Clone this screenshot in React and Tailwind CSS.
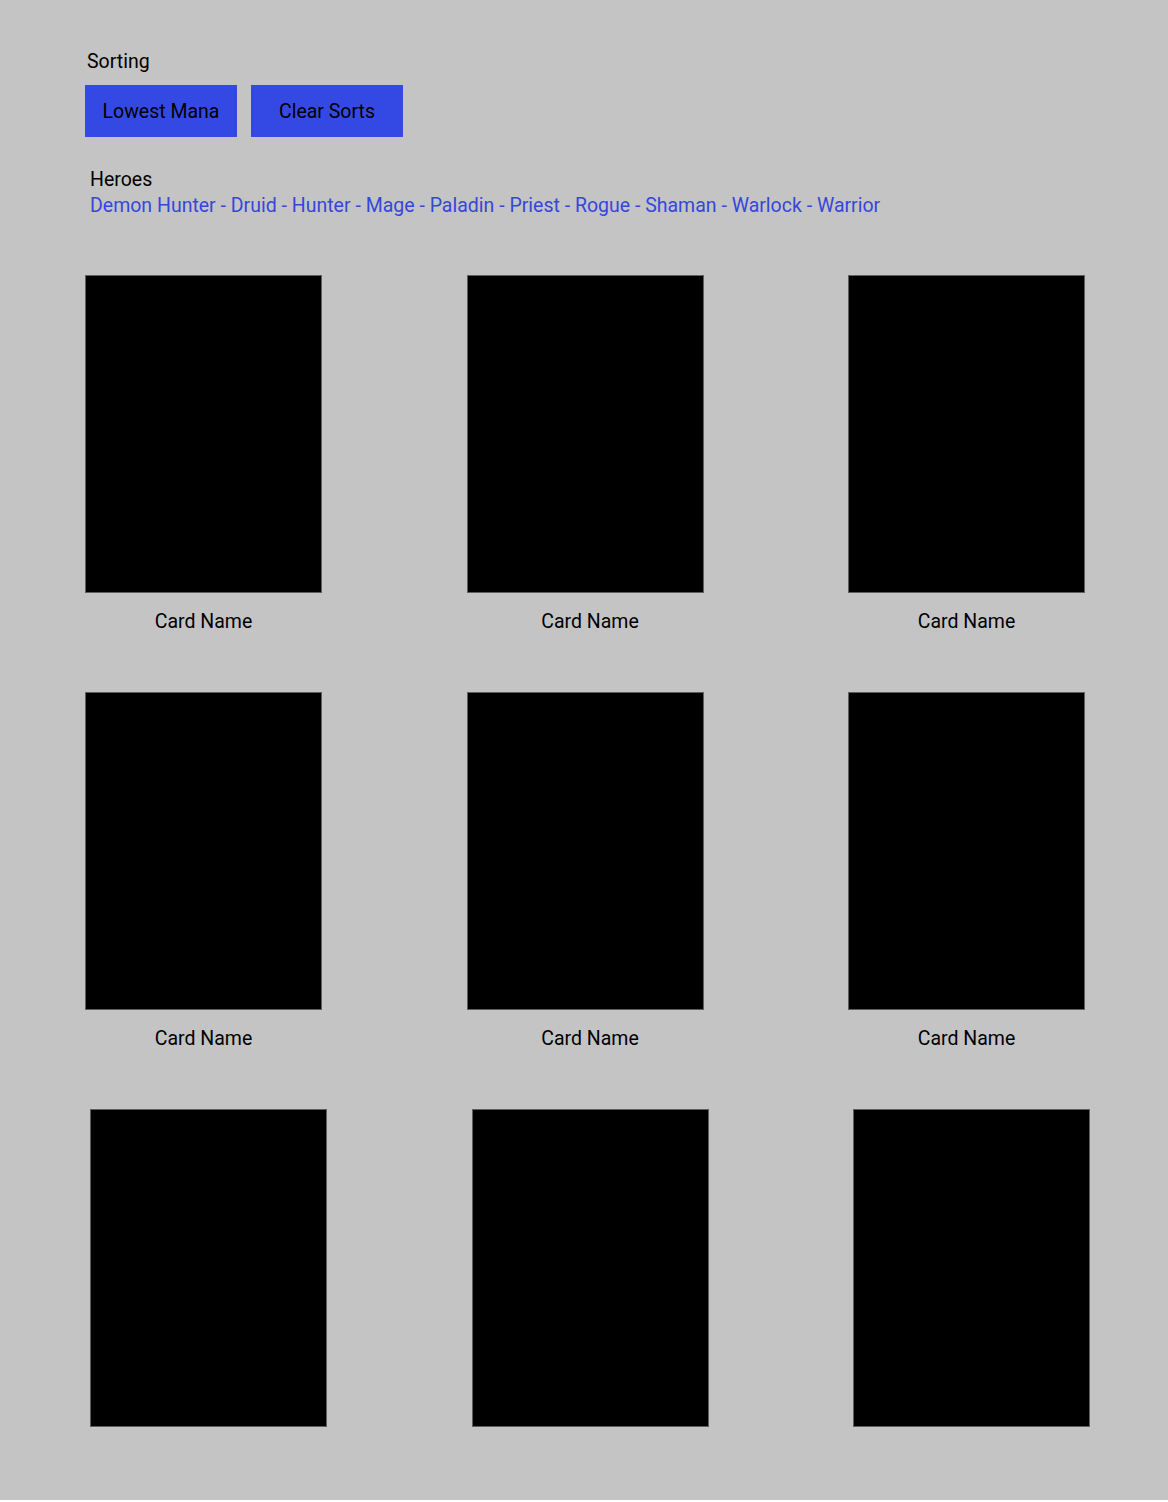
const heroes = [
  "Demon Hunter",
  "Druid",
  "Hunter",
  "Mage",
  "Paladin",
  "Priest",
  "Rogue",
  "Shaman",
  "Warlock",
  "Warrior",
];

function Card({ showName = true, nameShift = "" }) {
  return (
    <div className="flex flex-col w-[237px]">
      <div className="h-[318px] w-[237px] bg-black border border-[#5e5e5e]" />
      {showName && (
        <p className={`mt-[17px] text-center text-[19.5px] leading-[23px] text-black ${nameShift}`}>
          Card Name
        </p>
      )}
    </div>
  );
}

export default function App() {
  return (
    <div
      className="h-[1500px] w-full bg-[#c4c4c4] pl-[85px] pt-[50px]"
      style={{ fontFamily: "Roboto, 'Noto Sans', sans-serif" }}
    >
      <p className="ml-[2px] text-[19.5px] leading-[23px] text-black">Sorting</p>
      <div className="mt-[12px] flex gap-[14px]">
        <button className="h-[52px] w-[152px] bg-[#3449e4] pt-[2px] text-[19.5px] text-black">
          Lowest Mana
        </button>
        <button className="h-[52px] w-[152px] bg-[#3449e4] pt-[2px] text-[19.5px] text-black">
          Clear Sorts
        </button>
      </div>

      <div className="ml-[5px] mt-[30px]">
        <p className="text-[19.5px] leading-[25px] text-black">Heroes</p>
        <p className="mt-[1px] text-[19.5px] leading-[25px] text-[#3447de]">
          {heroes.map((h, i) => (
            <span key={h}>
              <a href="#" className="text-[#3447de]">{h}</a>
              {i < heroes.length - 1 && " - "}
            </span>
          ))}
        </p>
      </div>

      <div className="mt-[57px] flex flex-col gap-[59px]">
        <div className="grid grid-cols-[237px_237px_237px] gap-x-[144.5px]">
          <Card />
          <Card nameShift="pl-[10px]" />
          <Card />
        </div>
        <div className="grid grid-cols-[237px_237px_237px] gap-x-[144.5px]">
          <Card />
          <Card nameShift="pl-[10px]" />
          <Card />
        </div>
        <div className="ml-[5px] grid grid-cols-[237px_237px_237px] gap-x-[144.5px]">
          <Card showName={false} />
          <Card showName={false} />
          <Card showName={false} />
        </div>
      </div>
    </div>
  );
}
